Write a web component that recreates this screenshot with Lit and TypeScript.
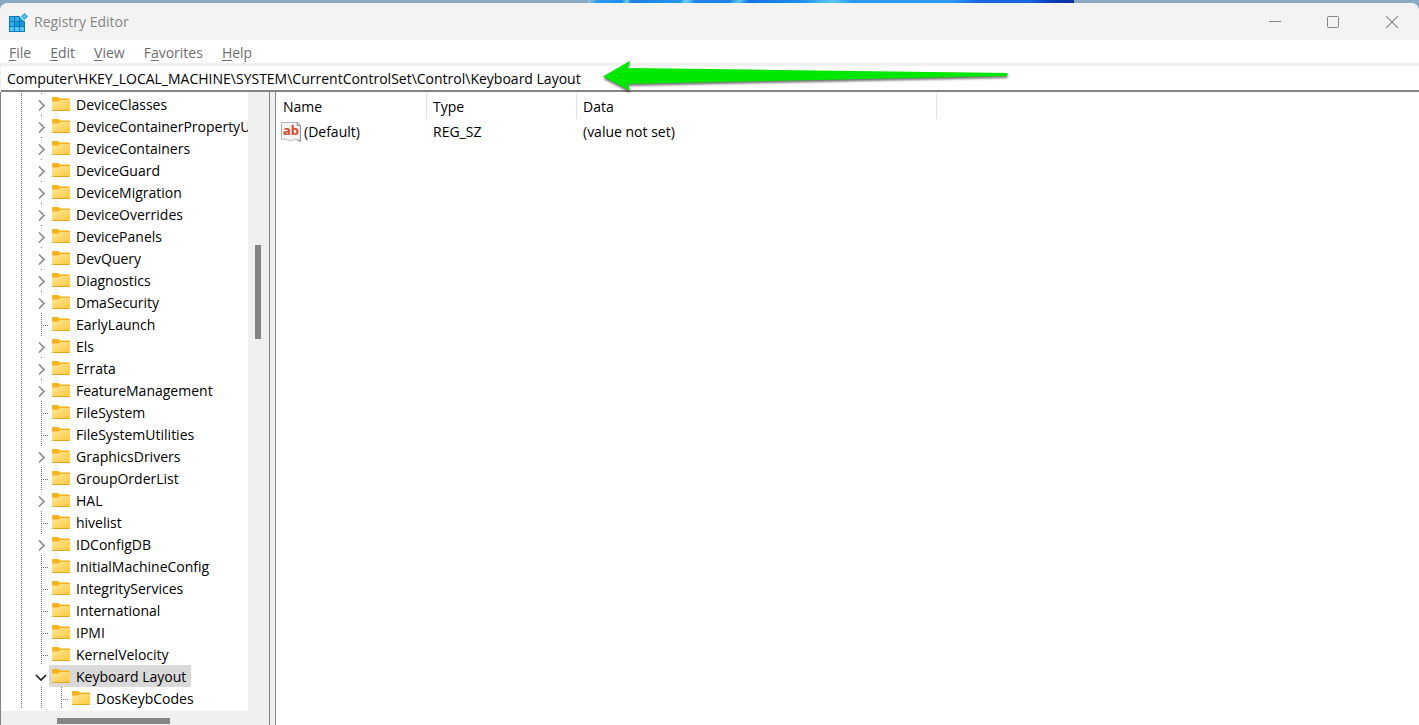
import { LitElement, html, css, svg, nothing } from "lit";
import { customElement, property, state } from "lit/decorators.js";
import { classMap } from "lit/directives/class-map.js";

type NodeState = "closed" | "open" | "leaf";

interface RegistryKey {
  name: string;
  state: NodeState;
  level: number;
}

const key = (name: string, state: NodeState = "leaf", level = 1): RegistryKey => ({ name, state, level });

const KEYS: RegistryKey[] = [
  key("DeviceClasses", "closed"),
  key("DeviceContainerPropertyU", "closed"),
  key("DeviceContainers", "closed"),
  key("DeviceGuard", "closed"),
  key("DeviceMigration", "closed"),
  key("DeviceOverrides", "closed"),
  key("DevicePanels", "closed"),
  key("DevQuery", "closed"),
  key("Diagnostics", "closed"),
  key("DmaSecurity", "closed"),
  key("EarlyLaunch"),
  key("Els", "closed"),
  key("Errata", "closed"),
  key("FeatureManagement", "closed"),
  key("FileSystem"),
  key("FileSystemUtilities"),
  key("GraphicsDrivers", "closed"),
  key("GroupOrderList"),
  key("HAL", "closed"),
  key("hivelist"),
  key("IDConfigDB", "closed"),
  key("InitialMachineConfig"),
  key("IntegrityServices"),
  key("International"),
  key("IPMI"),
  key("KernelVelocity"),
  key("Keyboard Layout", "open"),
  key("DosKeybCodes", "leaf", 2),
];

const folderIcon = svg`
  <svg class="folder" width="18" height="14" viewBox="0 0 18 14" aria-hidden="true">
    <defs>
      <linearGradient id="f" x1="0" y1="0" x2="1" y2="1">
        <stop offset="0" stop-color="#ffe79a" />
        <stop offset="1" stop-color="#ffc83a" />
      </linearGradient>
    </defs>
    <path d="M0 1Q0 0 1 0H6.2L8 1.6H17Q18 1.6 18 2.6V6H0Z" fill="#f7b21b" />
    <path d="M0 4.4H6.4L8.2 3H18V13Q18 14 17 14H1Q0 14 0 13Z" fill="url(#f)" />
    <path d="M0 13H18Q18 14 17 14H1Q0 14 0 13Z" fill="#e5a520" />
  </svg>`;

@customElement("registry-tree")
class RegistryTree extends LitElement {
  @property({ attribute: false }) keys: RegistryKey[] = [];
  @state() private selected = "Keyboard Layout";

  static styles = css`
    :host {
      display: block;
      overflow: hidden;
      padding-top: 1px;
      background: #fff;
      --dots: repeating-linear-gradient(to bottom, #777 0 1px, transparent 1px 2px);
    }
    .keys {
      list-style: none;
      margin: 0;
      padding: 0;
    }
    .row {
      display: flex;
      height: 22px;
      padding-left: 10px;
    }
    .guide,
    .node {
      flex: none;
      width: 20px;
      background: var(--dots) 10px 0 / 1px 100% no-repeat;
    }
    .node {
      display: flex;
      width: 18px;
    }
    .leaf {
      background:
        var(--dots) 10px 0 / 1px 100% no-repeat,
        repeating-linear-gradient(to right, #777 0 1px, transparent 1px 2px) 10px 12px / 8px 1px no-repeat;
    }
    .closed {
      background: var(--dots) 10px 0 / 1px 2px no-repeat;
    }
    .open {
      background: none;
    }
    button {
      border: 0;
      padding: 0;
      background: none;
      color: inherit;
      font: inherit;
    }
    .toggle {
      display: flex;
      align-items: center;
      padding: 2px 0 0 3px;
    }
    .label {
      display: flex;
      align-items: center;
      gap: 6px;
      padding: 0 5px 0 3px;
      border-radius: 2px;
      white-space: nowrap;
    }
    .text {
      padding-top: 2px;
    }
    .selected {
      background: #d9d9d9;
    }
    .folder {
      flex: none;
    }
  `;

  private chevron(state: NodeState) {
    const d = state === "open" ? "M2 4L7 9L12 4" : "M5 1.5L10 6.5L5 11.5";
    const color = state === "open" ? "#222" : "#8a8a8a";
    return html`<svg width="14" height="13" viewBox="0 0 14 13" aria-hidden="true">
      <path d=${d} fill="none" stroke=${color} stroke-width="1.7" />
    </svg>`;
  }

  render() {
    return html`<ul class="keys">
      ${this.keys.map(
        (k) => html`<li class="row">
          ${Array.from({ length: k.level }, () => html`<span class="guide"></span>`)}
          <span class="node ${k.state}">
            ${k.state === "leaf"
              ? nothing
              : html`<button
                  class="toggle"
                  aria-label="Toggle ${k.name}"
                  aria-expanded=${k.state === "open"}
                >
                  ${this.chevron(k.state)}
                </button>`}
          </span>
          <button
            class=${classMap({ label: true, selected: k.name === this.selected })}
            @click=${() => (this.selected = k.name)}
          >
            ${folderIcon}<span class="text">${k.name}</span>
          </button>
        </li>`
      )}
    </ul>`;
  }
}

@customElement("value-list")
class ValueList extends LitElement {
  static styles = css`
    :host {
      display: block;
      padding-top: 1px;
      background: #fff;
    }
    table {
      width: 100%;
      table-layout: fixed;
      border-collapse: separate;
      border-spacing: 0;
    }
    .name {
      width: 151px;
    }
    .type {
      width: 150px;
    }
    .data {
      width: 360px;
    }
    th,
    td {
      box-sizing: border-box;
      padding: 2px 0 0 6px;
      text-align: left;
      font-weight: 400;
      white-space: nowrap;
    }
    th {
      height: 26px;
      border-right: 1px solid #e2e2e2;
    }
    th:first-child {
      padding-left: 7px;
    }
    th:last-child {
      border-right: 0;
    }
    td {
      height: 24px;
    }
    td:first-child {
      padding-left: 5px;
    }
    .value {
      display: flex;
      align-items: center;
      gap: 3px;
    }
    .ab {
      fill: #d9472b;
      font: 700 13px "Open Sans", sans-serif;
    }
  `;

  render() {
    return html`<table>
      <colgroup>
        <col class="name" />
        <col class="type" />
        <col class="data" />
        <col />
      </colgroup>
      <thead>
        <tr>
          <th scope="col">Name</th>
          <th scope="col">Type</th>
          <th scope="col">Data</th>
          <th></th>
        </tr>
      </thead>
      <tbody>
        <tr>
          <td>
            <span class="value">
              <svg width="20" height="20" viewBox="0 0 20 20" aria-hidden="true">
                <path
                  d="M.5 .5H16L19.5 3.5V19.5Q17.500 18 16 17.500Q13.500 16.500 11.500 18Q9.500 19.500 7 18Q4.500 16 .5 17.500Z"
                  fill="#f4f4f4"
                  stroke="#b4b4b4"
                />
                <path d="M19.300 3.500V19.500L16 17.500" fill="none" stroke="#8c8c8c" />
                <path d="M16 .5V3.500H19.500Z" fill="#ccc" stroke="#a0a0a0" />
                <text class="ab" x="2" y="13">ab</text>
              </svg>
              (Default)
            </span>
          </td>
          <td>REG_SZ</td>
          <td>(value not set)</td>
          <td></td>
        </tr>
      </tbody>
    </table>`;
  }
}

@customElement("app-root")
class AppRoot extends LitElement {
  static styles = css`
    :host {
      display: block;
      font: 14px/20px "Open Sans", "Noto Sans", sans-serif;
      color: #000;
    }
    .desktop {
      display: flex;
      flex-direction: column;
      height: 100vh;
      box-sizing: border-box;
      padding-top: 3px;
      overflow: hidden;
      background:
        linear-gradient(
            115deg,
            #a9c2d6 0,
            #2b9cf0 2%,
            #1f8aee 7%,
            #6fd6f5 8%,
            #1f7fe8 9%,
            #2496f0 19%,
            #6fd6f5 20%,
            #1f86ea 22%,
            #1f7fe8 29%,
            #5cc8f5 31%,
            #1673e6 33%,
            #1f90ee 44%,
            #5cc8f5 50%,
            #2a9bf2 54%,
            #2a9bf2 74%,
            #1667e6 80%,
            #1667e6 90%,
            #0b3fc4 94%,
            #0b2fa0 100%
          )
          588px 0 / 486px 8px no-repeat,
        #8aaac4;
    }
    .window {
      position: relative;
      display: flex;
      flex: 1;
      flex-direction: column;
      min-height: 0;
      overflow: hidden;
      border-radius: 8px 8px 0 0;
      background: #f0f0f0;
    }
    .titlebar {
      display: flex;
      align-items: center;
      height: 37px;
      flex: none;
      padding-left: 8px;
      background: #f3f3f3;
      color: #858585;
    }
    .title {
      flex: 1;
      margin: 0;
      padding-left: 6px;
      font: inherit;
    }
    .caption {
      display: grid;
      place-items: center;
      width: 58px;
      height: 37px;
      padding: 0;
      border: 0;
      background: none;
    }
    .caption:last-child {
      width: 57px;
      padding-left: 3px;
    }
    .menu {
      display: flex;
      flex: none;
      gap: 19px;
      height: 23px;
      padding-left: 9px;
      background: #fff;
    }
    .menu button {
      padding: 2px 0 0;
      border: 0;
      background: none;
      color: #6d6d6d;
      font: inherit;
    }
    .menu u {
      text-underline-offset: 2px;
    }
    .address {
      flex: none;
      box-sizing: border-box;
      height: 26px;
      margin: 3px 0 0 1px;
      padding: 0 6px 0 6px;
      border: 0;
      border-bottom: 2px solid #828287;
      border-radius: 2px 0 0 0;
      outline: 0;
      background: #fff;
      color: inherit;
      font: inherit;
    }
    .panes {
      display: grid;
      grid-template-columns: 269px 1fr;
      flex: 1;
      gap: 5px;
      min-height: 0;
      border-left: 1px solid #828287;
    }
    .tree-pane {
      display: grid;
      grid-template-columns: minmax(0, 1fr) 21px;
      grid-template-rows: minmax(0, 1fr) 14px;
      min-height: 0;
      border-right: 1px solid #828287;
    }
    .track-y {
      padding: 153px 8px 0 7px;
    }
    .thumb-y {
      height: 94px;
      background: #858585;
    }
    .track-x {
      padding: 7px 0 0 56px;
    }
    .thumb-x {
      width: 113px;
      height: 6px;
      background: #858585;
    }
    value-list {
      border-left: 1px solid #828287;
    }
    .arrow {
      position: absolute;
      left: 600px;
      top: 53px;
      filter: drop-shadow(0 2px 1px rgb(0 0 0 / 55%));
      pointer-events: none;
    }
  `;

  render() {
    const menus = ["File", "Edit", "View", "Favorites", "Help"];
    const accessKey: Record<string, number> = { Favorites: 1 };
    return html`<main class="desktop">
      <section class="window" aria-label="Registry Editor">
        <header class="titlebar">
          <svg width="20" height="20" viewBox="0 0 20 20" aria-hidden="true">
            <path d="M1 4H17V20H1Z" fill="#0e78b8" />
            <path d="M2 5H6V9H2ZM7 5H11V9H7ZM2 10H6V14H2Z" fill="#2fb0e8" />
            <path d="M12 5H16V9H12ZM7 10H11V14H7ZM12 10H16V14H12Z" fill="#0f9ada" />
            <path d="M2 15H6V19H2ZM7 15H11V19H7ZM12 15H16V19H12Z" fill="#4fc8f8" />
            <path d="M16.500 -.5L21 4.500L16.500 9.500L11.500 4.500Z" fill="#f3f3f3" />
            <path d="M16.500 1L20 4.500L16.500 8L13 4.500Z" fill="#2f9fd8" />
            <path d="M16.500 2.700L18.300 4.500L16.500 6.300L14.700 4.500Z" fill="#5cc0ec" />
          </svg>
          <h1 class="title">Registry Editor</h1>
          <button class="caption" aria-label="Minimize">
            <svg width="12" height="12" viewBox="0 0 12 12"><path d="M0 5.5H12" stroke="#858585" /></svg>
          </button>
          <button class="caption" aria-label="Maximize">
            <svg width="12" height="12" viewBox="0 0 12 12">
              <rect x=".5" y=".5" width="11" height="11" rx="1" fill="none" stroke="#858585" />
            </svg>
          </button>
          <button class="caption" aria-label="Close">
            <svg width="12" height="12" viewBox="0 0 12 12">
              <path d="M0 0L12 12M12 0L0 12" stroke="#858585" stroke-width="1.1" />
            </svg>
          </button>
        </header>
        <nav class="menu" aria-label="Menu bar">
          ${menus.map((m) => {
            const i = accessKey[m] ?? 0;
            return html`<button>${m.slice(0, i)}<u>${m[i]}</u>${m.slice(i + 1)}</button>`;
          })}
        </nav>
        <input
          class="address"
          type="text"
          aria-label="Registry path"
          spellcheck="false"
          .value=${"Computer\\HKEY_LOCAL_MACHINE\\SYSTEM\\CurrentControlSet\\Control\\Keyboard Layout"}
        />
        <div class="panes">
          <div class="tree-pane">
            <registry-tree .keys=${KEYS}></registry-tree>
            <div class="track-y"><div class="thumb-y"></div></div>
            <div class="track-x"><div class="thumb-x"></div></div>
          </div>
          <value-list></value-list>
        </div>
        <svg class="arrow" width="412" height="40" viewBox="0 0 412 40" aria-hidden="true">
          <path d="M3 20.500L30.500 4.500L27.500 12L407.500 17V20L27.500 28L30.500 35Z" fill="#00e800" />
        </svg>
      </section>
    </main>`;
  }
}
